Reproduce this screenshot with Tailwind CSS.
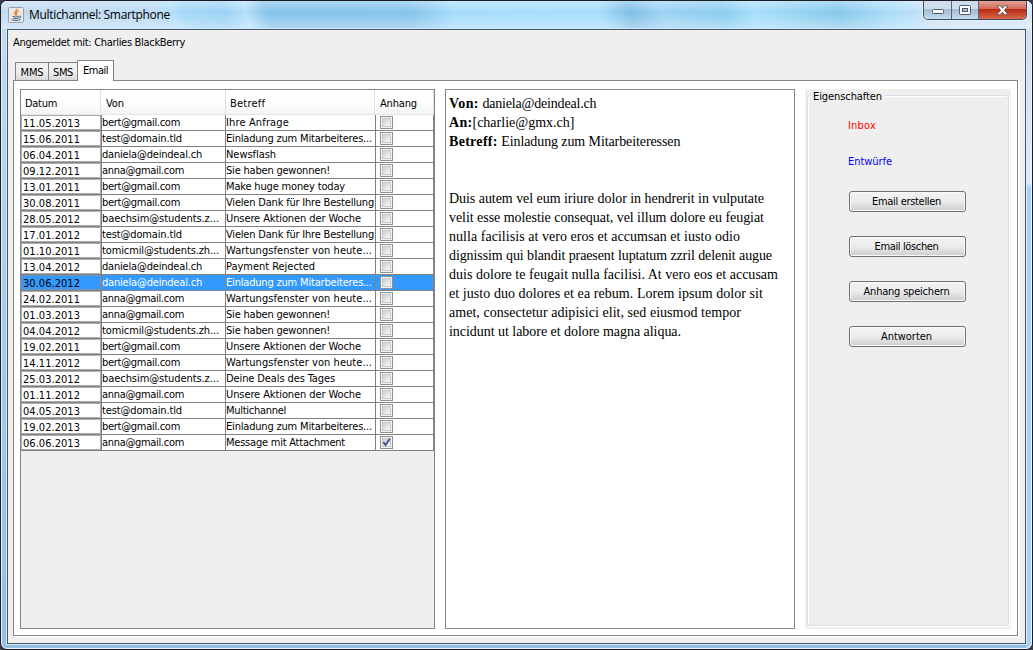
<!DOCTYPE html>
<html lang="de">
<head>
<meta charset="utf-8">
<title>Multichannel: Smartphone</title>
<script src="https://cdn.jsdelivr.net/npm/@tailwindcss/browser@4"></script>
</head>
<body class="bg-[#3a3a48] overflow-hidden">
<div class="relative w-[1033px] h-[650px] rounded-[7px] border border-[#1c1c26] bg-linear-to-b from-[#c3dcf3] via-[#a5cbea] to-[#94bfe0] overflow-hidden flex flex-col font-['DejaVu_Sans_Condensed','DejaVu_Sans',sans-serif] [font-stretch:condensed] text-[11px] text-black whitespace-nowrap">
  <div class="absolute inset-y-0 right-0 w-[6px] bg-linear-to-b from-[#cfe2f5] from-10% via-[#d9edff] via-28% to-[#a9cff2] to-29%"></div>
  <div class="absolute inset-0 rounded-[6px] border border-[#e6f3fd]"></div>

  <header class="relative h-[28px] shrink-0 flex items-center pl-[7px] bg-linear-to-r from-[#c2daf1] from-0% via-[#a4dbfb] via-60% to-[#d5e5f5]">
    <div class="absolute inset-0 bg-[linear-gradient(75deg,transparent_15%,#b3def9_17%,#a3d8f8_18%,#9bd2f5_22%,#b4e0fa_24%,#86c3ea_26%,#85c4eb_40%,#a5dcfc_44%,#a7defd_58%,#7fbfe6_61%,#9cd2f4_64%,#8acdf0_70%,#a6defb_73%,#86c9ea_81%,#a9dcfa_86%,transparent_90%)]"></div>
    <div class="absolute inset-0 bg-linear-to-b from-white/35 via-white/0 via-40% to-white/35"></div>
    <svg class="relative w-4 h-4 shrink-0" viewBox="0 0 16 16" fill="none">
      <rect x=".5" y=".5" width="15" height="15" rx="1" fill="#ece9e4" stroke="#9aa0a6"/>
      <path d="M8.8 1.8c1 2-2.800 2.600-2.200 4.400.2.800 1 1.300 1.200 2.300M10.600 4.200C8.800 5 7.800 5.700 8.400 6.700c.5.700.5 1.200-.2 1.900" stroke="#e8792b" stroke-width="1.300"/>
      <path d="M4.500 9.300c2 .8 5 .7 6.500 0M5 11c1.500.7 4 .7 5.500 0M11.200 9c2-.3 2 1.500-.2 2.200M3.500 12.600c2 1.200 7 1.100 9-.1" stroke="#4b7392" stroke-width="1.100"/>
    </svg>
    <span data-w="141" class="relative ml-[5px] font-['Open_Sans',sans-serif] [font-stretch:normal] text-[12px] leading-4">Multichannel: Smartphone</span>
    <div class="absolute right-[5px] top-[-1px] h-[20px] w-[104px] flex rounded-b-[5px] border border-t-0 border-[#3d4c5e] shadow-[0_0_0_1px_#e4f1fb] overflow-hidden">
      <div class="w-[28px] border-r border-[#55677b] bg-linear-to-b from-[#cfdeeb] from-45% via-[#a5bbcf] via-50% to-[#c2dcf0] flex justify-center">
        <svg class="mt-[8px] w-[14px] h-[8px]" viewBox="0 0 14 8"><rect x="1.500" y="1.500" width="11" height="4" rx="1" fill="#fff" stroke="#4c5866"/></svg>
      </div>
      <div class="w-[27px] border-r border-[#55677b] bg-linear-to-b from-[#cfdeeb] from-45% via-[#a5bbcf] via-50% to-[#c2dcf0] flex justify-center">
        <svg class="mt-[5px] w-[12px] h-[11px]" viewBox="0 0 12 11"><rect x=".5" y=".5" width="11" height="9" rx="1" fill="#fff" stroke="#4c5866"/><rect x="3.500" y="3.500" width="5" height="3" fill="#9fc0dc" stroke="#4c5866"/></svg>
      </div>
      <div class="flex-1 bg-[linear-gradient(180deg,#e3aa9e,#d06a58_46%,#b92b14_50%,#d96a4c)] flex justify-center">
        <svg class="mt-[5px] w-[13px] h-[11px]" viewBox="0 0 13 11"><path d="M1 .8h3.200l2.300 2.500L8.800.8H12L8.400 5.300l3.600 4.400H8.800L6.500 7.200 4.200 9.700H1l3.600-4.400z" fill="#fff" stroke="#554a55" stroke-width=".8"/></svg>
      </div>
    </div>
  </header>

  <main class="relative mx-[6px] mb-[6px] flex-1 flex flex-col border border-[#46566a] bg-[#efefef] shadow-[0_0_0_1px_#d5e9f8] px-[5px] pb-[7px]">
    <div class="h-[31px] pt-[5px] leading-4"><span data-w="172">Angemeldet mit: Charlies BlackBerry</span></div>
    <nav class="h-[19px] pl-[2px] flex items-end relative z-10 leading-4">
      <div class="w-[34px] h-[18px] border border-b-0 border-[#83838f] bg-linear-to-b from-[#f0f0f0] from-50% to-[#d8d8d8] text-center pt-[2px]"><span data-w="23">MMS</span></div>
      <div class="w-[29px] h-[18px] border border-b-0 border-l-0 border-[#83838f] bg-linear-to-b from-[#f0f0f0] from-50% to-[#d8d8d8] text-center pt-[2px]"><span data-w="20">SMS</span></div>
      <div class="w-[37px] h-[21px] -mb-px -ml-px border border-b-0 border-[#83838f] bg-white text-center pt-[2px]"><span data-w="25">Email</span></div>
    </nav>
    <section class="flex-1 w-[1005px] border border-[#83838f] bg-white p-[6px] pt-[8px] flex shadow-[1px_1px_0_#fff,2px_2px_0_#f8f8f8]">
      <div class="w-[415px] h-[540px] border border-[#83838f] bg-[#efefef]">
        <div class="h-[25px] w-[413px] bg-linear-to-b from-white from-45% to-[#f3f4f5] border-b border-[#e3e6e9] flex leading-[27px]">
          <div class="w-[80px] pl-[4px] border-r border-[#dfe1e3]"><span data-w="32">Datum</span></div>
          <div class="w-[125px] pl-[5px] border-r border-[#dfe1e3]"><span data-w="18">Von</span></div>
          <div class="w-[149px] pl-[4px] border-r border-[#dfe1e3]"><span data-w="35">Betreff</span></div>
          <div class="flex-1 pl-[5px] border-r border-[#dfe1e3]"><span data-w="37">Anhang</span></div>
        </div>
        <div id="rows"></div>
      </div>
      <article class="ml-[10px] w-[350px] h-[540px] border border-[#83838f] bg-white pl-[3px] pt-[4px] font-['Liberation_Serif',serif] text-[14px] leading-[19px]">
        <p><b class="tracking-[0.4px]">Von:</b> <span data-w="114">daniela@deindeal.ch</span></p>
        <p><b class="tracking-[0.3px]">An:</b><span data-w="102">[charlie@gmx.ch]</span></p>
        <p><b class="tracking-[0.3px]">Betreff:</b> <span data-w="179">Einladung zum Mitarbeiteressen</span></p>
        <p class="mt-[38px]"><span data-w="315">Duis autem vel eum iriure dolor in hendrerit in vulputate</span><br><span data-w="315">velit esse molestie consequat, vel illum dolore eu feugiat</span><br><span data-w="291">nulla facilisis at vero eros et accumsan et iusto odio</span><br><span data-w="323">dignissim qui blandit praesent luptatum zzril delenit augue</span><br><span data-w="329">duis dolore te feugait nulla facilisi. At vero eos et accusam</span><br><span data-w="314">et justo duo dolores et ea rebum. Lorem ipsum dolor sit</span><br><span data-w="292">amet, consectetur adipisici elit, sed eiusmod tempor</span><br><span data-w="232">incidunt ut labore et dolore magna aliqua.</span></p>
      </article>
      <aside class="ml-[10px] w-[206px] h-[540px] bg-[#efefef] pl-[2px] pt-[6px]">
        <div class="w-[202px] h-[531px] rounded-[3px] border border-[#d5dfe8] shadow-[inset_1px_1px_0_#fff,1px_1px_0_#fff]">
          <div class="-mt-[7px] ml-[3px] w-[74px] h-4 leading-4 pl-[2px] bg-[#efefef]"><span data-w="69">Eigenschaften</span></div>
          <div class="pl-[40px] pt-[13px] leading-4 text-[#f00]"><span data-w="28">Inbox</span></div>
          <div class="pl-[40px] pt-[20px] leading-4 text-[#00f]"><span data-w="44">Entwürfe</span></div>
          <div class="mt-[21px] ml-[41px] w-[117px] flex flex-col gap-[24px]">
            <button class="h-[21px] pr-[2px] rounded-[3px] border border-[#707070] bg-linear-to-b from-[#f4f4f4] from-0% via-[#ebebeb] via-50% to-[#cdcdcd] shadow-[inset_0_0_0_1px_#fafafa] leading-[18px]"><span data-w="69">Email erstellen</span></button>
            <button class="h-[21px] pr-[2px] rounded-[3px] border border-[#707070] bg-linear-to-b from-[#f4f4f4] from-0% via-[#ebebeb] via-50% to-[#cdcdcd] shadow-[inset_0_0_0_1px_#fafafa] leading-[18px]"><span data-w="64">Email löschen</span></button>
            <button class="h-[21px] pr-[2px] rounded-[3px] border border-[#707070] bg-linear-to-b from-[#f4f4f4] from-0% via-[#ebebeb] via-50% to-[#cdcdcd] shadow-[inset_0_0_0_1px_#fafafa] leading-[18px]"><span data-w="86">Anhang speichern</span></button>
            <button class="h-[21px] pr-[2px] rounded-[3px] border border-[#707070] bg-linear-to-b from-[#f4f4f4] from-0% via-[#ebebeb] via-50% to-[#cdcdcd] shadow-[inset_0_0_0_1px_#fafafa] leading-[18px]"><span data-w="51">Antworten</span></button>
          </div>
        </div>
      </aside>
    </section>
  </main>
</div>
<script>
const B='bert@gmail.com',T='test@domain.tld',D='daniela@deindeal.ch',A='anna@gmail.com',S='baechsim@students.z...',Z='tomicmil@students.zh...';
const E='Einladung zum Mitarbeiteres...',V='Vielen Dank für Ihre Bestellung',W='Wartungsfenster von heute...',G='Sie haben gewonnen!',U='Unsere Aktionen der Woche';
// Text widths in pixels for the fixed-width columns
const width={[B]:78,[T]:80,[D]:100,[A]:82,[S]:117,[Z]:117,[E]:146,[V]:148,[W]:146,[G]:104,[U]:135,'Ihre Anfrage':63,'Newsflash':50,'Make huge money today':119,'Payment Rejected':89,'Deine Deals des Tages':109,'Multichannel':60,'Message mit Attachment':119};
const data=[['11.05.2013',B,'Ihre Anfrage'],['15.06.2011',T,E],['06.04.2011',D,'Newsflash'],['09.12.2011',A,G],['13.01.2011',B,'Make huge money today'],['30.08.2011',B,V],['28.05.2012',S,U],['17.01.2012',T,V],['01.10.2011',Z,W],['13.04.2012',D,'Payment Rejected'],['30.06.2012',D,E],['24.02.2011',A,W],['01.03.2013',A,G],['04.04.2012',Z,G],['19.02.2011',B,U],['14.11.2012',B,W],['25.03.2012',S,'Deine Deals des Tages'],['01.11.2012',A,U],['04.05.2013',T,'Multichannel'],['19.02.2013',B,E],['06.06.2013',A,'Message mit Attachment']];
document.getElementById('rows').innerHTML=data.map((r,i)=>{
  const sel=i===10;
  return `<div class="flex h-4 w-[413px] leading-[16px] ${sel?'bg-[#3399ff] text-white':'bg-white'}">
    <div class="w-[81px] border-r border-b border-[#808080]"><div class="h-[15px] border pl-[1px] leading-[15px] text-black ${sel?'border-[#6f93b8]':'border-[#abadb3]'}"><span data-w="57">${r[0]}</span></div></div>
    <div class="w-[124px] border-r border-b ${sel?'border-dotted border-[#b8763c]':'border-[#808080]'}"><span data-w="${width[r[1]]}">${r[1]}</span></div>
    <div class="w-[150px] border-r border-b border-[#808080]"><span data-w="${width[r[2]]}">${r[2]}</span></div>
    <div class="flex-1 border-r border-b border-[#808080] pl-[4px] pt-px"><div class="size-[13px] border border-[#8e8f8f] bg-[#f4f4f4] p-px"><div class="size-[9px] border border-[#c3c7cc] bg-linear-to-br from-[#cdd0d6] to-[#f7f7f7]">${i===20?'<svg class="size-[9px] -m-px" viewBox="0 0 9 9" fill="none"><path d="M1.300 4.200 3.600 7 7.800.8" stroke="#3c528b" stroke-width="1.900"/></svg>':''}</div></div></div>
  </div>`}).join('');
function fitText(){
  document.querySelectorAll('[data-w]').forEach(s=>{
    s.style.letterSpacing='0px';
    s.style.letterSpacing=((+s.dataset.w-s.getBoundingClientRect().width)/s.textContent.length).toFixed(3)+'px';
  });
}
window.addEventListener('load',()=>{fitText();document.fonts.ready.then(fitText);requestAnimationFrame(fitText);});
</script>
</body>
</html>
